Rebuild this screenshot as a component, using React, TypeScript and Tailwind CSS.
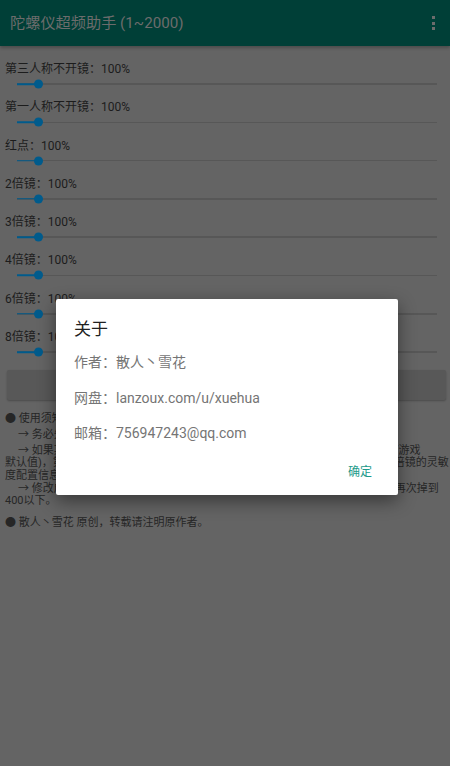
import React from "react";

const labels = [
  "第三人称不开镜：100%",
  "第一人称不开镜：100%",
  "红点：100%",
  "2倍镜：100%",
  "3倍镜：100%",
  "4倍镜：100%",
  "6倍镜：100%",
  "8倍镜：100%",
];

function Row({ label }: { label: string }) {
  return (
    <div className="h-[38.3px] flex flex-col">
      <div className="h-4 pl-[5px] text-[12px] leading-[18px] text-[#1c1c1c] whitespace-nowrap">{label}</div>
      <div className="relative h-4 ml-[17px] mr-[13px] flex items-center">
        <div className="h-[1.5px] w-full bg-[#575757]" />
        <div className="absolute left-0 top-1/2 -translate-y-1/2 h-[1.5px] w-[21px] bg-[#005b8c]" />
        <div className="absolute left-[16.5px] top-1/2 -translate-y-1/2 w-[9px] h-[9px] rounded-full bg-[#005b8c]" />
      </div>
    </div>
  );
}

export default function App() {
  const font = { fontFamily: 'Roboto, "Noto Sans CJK SC", sans-serif' };
  return (
    <div className="relative w-[450px] h-[766px] overflow-hidden bg-[#646464]" style={font}>
      <div className="h-[46px] bg-[#003f37] flex items-center justify-between pl-[10px] pr-[15px] shadow-[0_2px_3px_rgba(0,0,0,0.25)] relative">
        <div className="text-[15.2px] text-[#6c6c6c] whitespace-nowrap">陀螺仪超频助手 (1~2000)</div>
        <div className="flex flex-col gap-[2.5px]">
          <div className="w-[3px] h-[3px] bg-[#6c6c6c]" />
          <div className="w-[3px] h-[3px] bg-[#6c6c6c]" />
          <div className="w-[3px] h-[3px] bg-[#6c6c6c]" />
        </div>
      </div>

      <div className="pt-[14px]">
        {labels.map((l) => (
          <Row key={l} label={l} />
        ))}
      </div>

      <div className="mt-[3.5px] ml-[7px] mr-[4px] h-[30px] rounded-[2px] bg-[#585858] shadow-[0_1px_2px_rgba(0,0,0,0.25)]" />

      <div className="mt-[13px] px-[5px] text-[11px] leading-[12.5px] text-[#262626] whitespace-nowrap">
        <div>● 使用须知：</div>
        <div className="mt-[3.5px] pl-[13px]">→ 务必先关闭游戏再进行修改，否则修改不会生效。</div>
        <div className="mt-[3.5px] pl-[13px]">→ 如果某项数值修改后仍然无效，请先清除游戏数据目录下的灵敏度配置信息(游戏</div>
        <div>默认值)，第一次修改前建议先手动备份游戏原有的配置文件，以免丢失原来各个倍镜的灵敏</div>
        <div>度配置信息。</div>
        <div className="mt-[0.5px] pl-[13px]">→ 修改成功后如果发现灵敏度在游戏重新启动后又恢复原样，请检查数值是否再次掉到</div>
        <div>400以下。</div>
        <div className="mt-[9.5px]">● 散人丶雪花 原创，转载请注明原作者。</div>
      </div>

      <div className="absolute left-[56px] top-[299px] w-[342px] h-[196px] bg-white rounded-[2px] shadow-[0_6px_18px_rgba(0,0,0,0.45)] flex flex-col">
        <div className="pl-[18px] pt-[19px] text-[17px] leading-[22px] text-[#212121]">关于</div>
        <div className="pl-[18px] mt-[12px] flex flex-col gap-[15.5px] text-[14px] leading-[20px] text-[#757575]">
          <div>作者：散人丶雪花</div>
          <div>网盘：lanzoux.com/u/xuehua</div>
          <div>邮箱：756947243@qq.com</div>
        </div>
        <div className="flex justify-end pr-[26px] mt-[21px]">
          <div className="text-[12px] leading-[16px] text-[#1d9a8a]">确定</div>
        </div>
      </div>
    </div>
  );
}
